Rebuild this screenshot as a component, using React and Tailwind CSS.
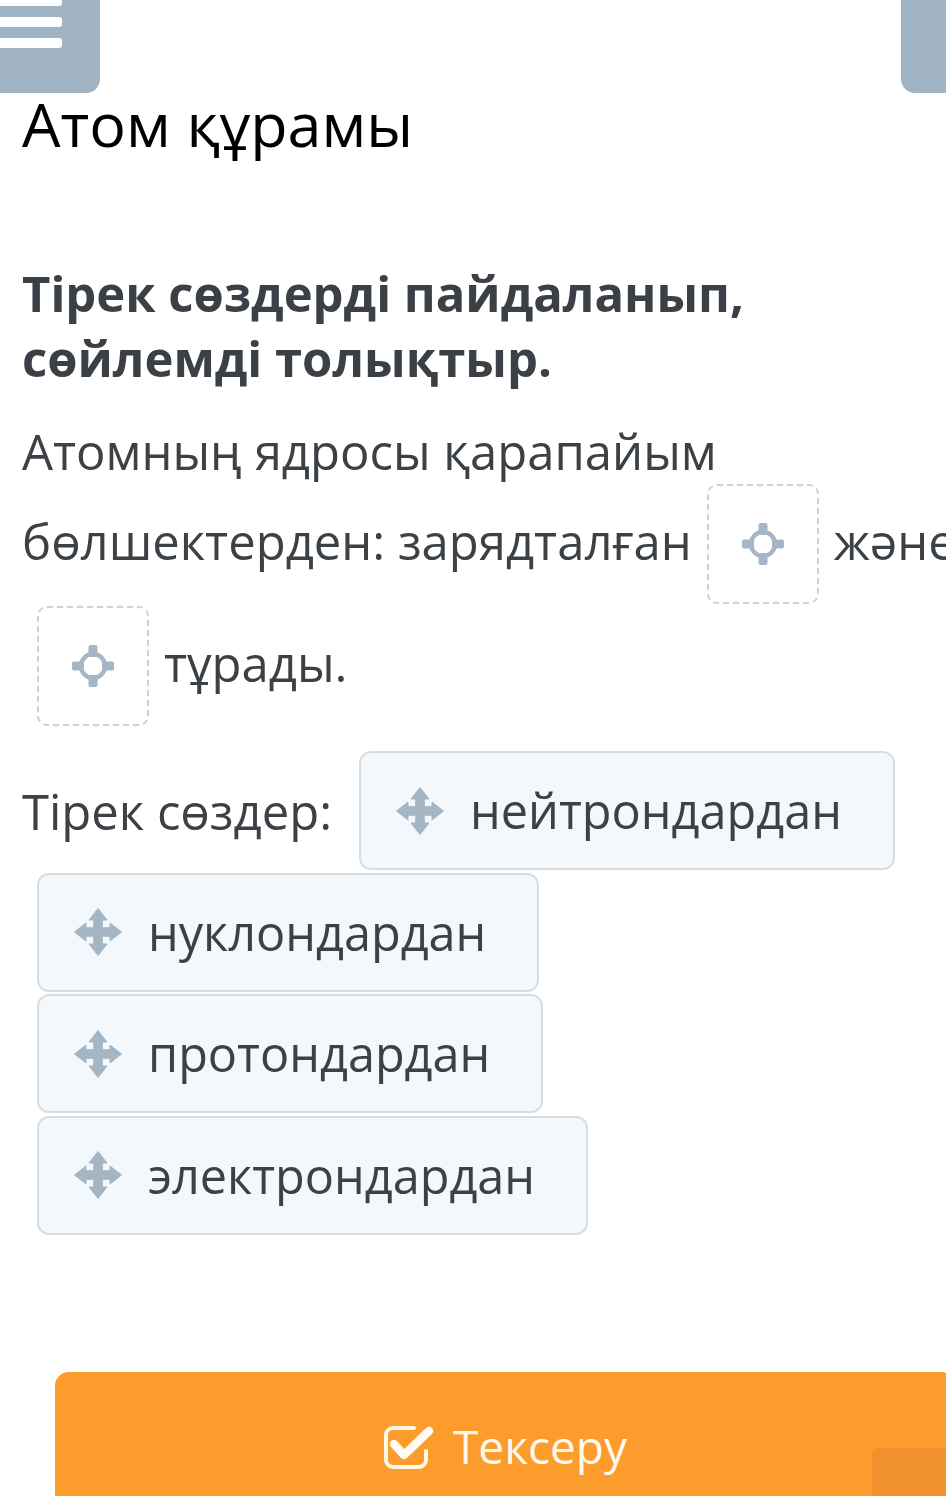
import React from "react";

function Target() {
  return (
    <svg width="44" height="44" viewBox="-22 -22 44 44" className="text-[#a6b6c4]">
      <circle cx="0" cy="0" r="12" fill="none" stroke="currentColor" strokeWidth="4.5" />
      <rect x="-4.5" y="-21" width="9" height="12" rx="2" fill="currentColor" />
      <rect x="-4.5" y="9" width="9" height="12" rx="2" fill="currentColor" />
      <rect x="-21" y="-4.5" width="12" height="9" rx="2" fill="currentColor" />
      <rect x="9" y="-4.5" width="12" height="9" rx="2" fill="currentColor" />
    </svg>
  );
}

function MoveIcon() {
  return (
    <svg width="50" height="50" viewBox="0 0 50 50" className="text-[#a4b5c4] shrink-0">
      <g fill="currentColor" stroke="currentColor" strokeWidth="1" strokeLinejoin="round">
        <path d="M25 1.5 L34 13 L16 13 Z" />
        <path d="M25 48.5 L34 37 L16 37 Z" />
        <path d="M1.5 25 L13 16 L13 34 Z" />
        <path d="M48.5 25 L37 16 L37 34 Z" />
        <rect x="20.75" y="12" width="8.5" height="26" />
        <rect x="12" y="20.75" width="26" height="8.5" />
      </g>
    </svg>
  );
}

function Zone() {
  return (
    <span className="inline-block overflow-hidden align-[-45px] w-[112px] h-[120px] mx-[15px] my-[1px] border-2 border-dashed border-[#cdd1d5] rounded-[10px] bg-white">
      <span className="flex h-full w-full items-center justify-center">
        <Target />
      </span>
    </span>
  );
}

function Chip({ children }) {
  return (
    <div className="ml-[15px] flex items-center h-[119px] rounded-[12px] border-2 border-[#d8dde2] bg-[#f3f8fc] pl-[34px] pr-[51px] gap-[25px] text-[48.6px] leading-none text-[#3c4147]">
      <MoveIcon />
      <span>{children}</span>
    </div>
  );
}

function CheckIcon() {
  return (
    <svg width="52" height="46" viewBox="0 0 52 46" fill="none">
      <path
        d="M31 4 H10 a7 7 0 0 0 -7 7 V36 a7 7 0 0 0 7 7 H36 a7 7 0 0 0 7 -7 V27"
        stroke="#fff6e6"
        strokeWidth="4"
        strokeLinecap="round"
        strokeLinejoin="round"
      />
      <path
        d="M11 20 L21 31 L46 7"
        stroke="#fffaf2"
        strokeWidth="8.5"
        strokeLinecap="round"
        strokeLinejoin="round"
      />
    </svg>
  );
}

export default function App() {
  return (
    <div className="relative w-[946px] h-[1496px] overflow-hidden bg-white font-['Open_Sans',sans-serif]">
      <div className="flex justify-between w-[946px]">
        <div className="w-[100px] h-[93px] bg-[#a0b4c3] rounded-br-[14px] flex flex-col gap-[11px]">
          <div className="-mt-[4px] w-[62px] h-[10px] bg-white rounded-r-[3px]" />
          <div className="w-[62px] h-[10px] bg-white rounded-r-[3px]" />
          <div className="w-[62px] h-[10px] bg-white rounded-r-[3px]" />
        </div>
        <div className="w-[45px] h-[93px] bg-[#a0b4c3] rounded-bl-[14px]" />
      </div>

      <div className="w-[990px] pl-[22px]">
        <h1 className="mt-[1px] text-[61px] leading-[60px] font-normal text-black">Атом құрамы</h1>

        <h2 className="mt-[107px] text-[49px] leading-[65px] font-bold text-[#3b4046]">
          Тірек сөздерді пайдаланып,
          <br />
          сөйлемді толықтыр.
        </h2>

        <p className="mt-[28px] text-[49px] leading-[64px] text-[#3c4146]">
          Атомның ядросы қарапайым
          <br />
          бөлшектерден: зарядталған
          <Zone />
          және
          <br />
          <Zone />
          тұрады.
        </p>

        <div className="mt-[24px] flex flex-wrap items-center gap-y-[2.5px] text-[49px] leading-[56px] text-[#3c4146]">
          <span className="mr-[12px]">Тірек сөздер:</span>
          <Chip>нейтрондардан</Chip>
          <Chip>нуклондардан</Chip>
          <Chip>протондардан</Chip>
          <Chip>электрондардан</Chip>
        </div>
      </div>

      <div className="mt-[137px] ml-[55px] w-[900px] h-[150px] rounded-[14px] bg-[#fb9c2c] flex items-center justify-center gap-[18px] text-[#fff8ec] text-[46px] leading-none">
        <CheckIcon />
        <span className="-mt-[2px]">Тексеру</span>
      </div>

      <div className="absolute left-[872px] top-[1448px] w-[100px] h-[100px] bg-[#f1922e] rounded-tl-[6px]" />
    </div>
  );
}
